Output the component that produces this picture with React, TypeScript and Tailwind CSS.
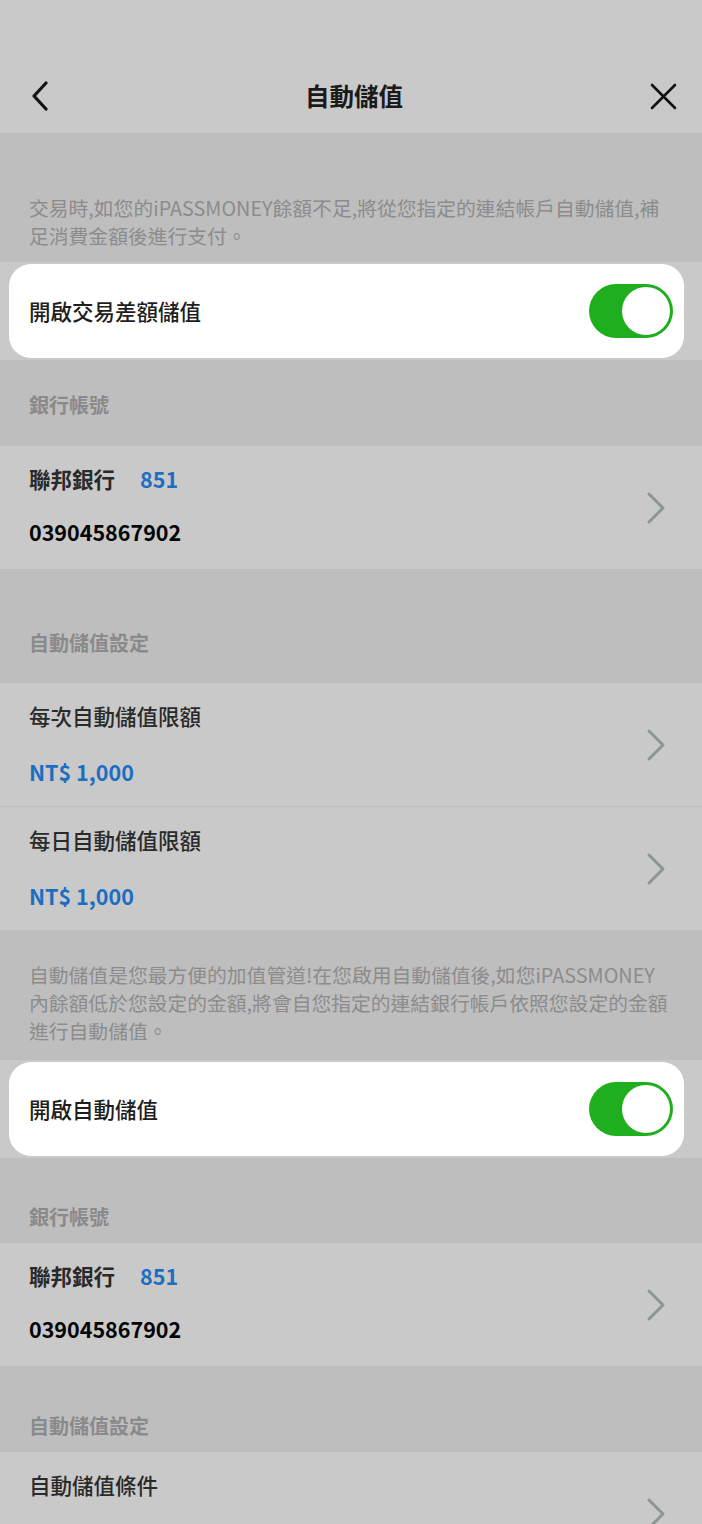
import React from "react";

const FONT = { fontFamily: '"Noto Sans CJK TC", "Noto Sans", sans-serif' };

function Chevron() {
  return (
    <svg width="20" height="34" viewBox="0 0 20 34" fill="none">
      <path d="M3 3 L17 17 L3 31" stroke="#8c9697" strokeWidth="3" strokeLinecap="round" strokeLinejoin="round" />
    </svg>
  );
}

function Toggle() {
  return (
    <div className="relative w-[84px] h-[54px] rounded-full bg-[#1fae1e]">
      <div className="absolute right-[3px] top-[3px] w-[48px] h-[48px] rounded-full bg-white" />
    </div>
  );
}

function ToggleRow({ label }: { label: string }) {
  return (
    <div className="bg-[#c9c9c9] py-[2px]">
      <div className="ml-[9px] mr-[18px] h-[94px] rounded-[22px] bg-white flex items-center justify-between pl-[20px] pr-[11px]">
        <span className="text-[21.5px] font-medium text-[#1e1e1e] leading-[28px]">{label}</span>
        <Toggle />
      </div>
    </div>
  );
}

function SectionTitle({ text, h, pt }: { text: string; h: string; pt: string }) {
  return (
    <div className={`bg-[#bebebe] px-[29px] ${h} ${pt}`}>
      <span className="text-[20px] font-bold text-[#8a8a8a] leading-[28px] block">{text}</span>
    </div>
  );
}

function BankRow() {
  return (
    <div className="bg-[#c9c9c9] h-[123px] flex items-center justify-between pl-[29px] pr-[36px]">
      <div className="flex flex-col pb-[4px]">
        <div className="flex items-center h-[28px]">
          <span className="text-[21.5px] font-bold text-[#2a2a2a] leading-[28px]">聯邦銀行</span>
          <span className="ml-[25px] text-[21.5px] font-bold text-[#1b6ec2] leading-[28px]">851</span>
        </div>
        <span className="mt-[25px] text-[21.5px] font-bold text-[#050505] leading-[28px]">039045867902</span>
      </div>
      <Chevron />
    </div>
  );
}

function LimitRow({ label }: { label: string }) {
  return (
    <div className="bg-[#c9c9c9] h-[123px] flex items-center justify-between pl-[29px] pr-[36px]">
      <div className="flex flex-col pb-[2px]">
        <span className="text-[21.5px] font-medium text-[#2a2a2a] leading-[28px]">{label}</span>
        <span className="mt-[28px] text-[21.5px] font-bold text-[#1b6ec2] leading-[28px]">NT$ 1,000</span>
      </div>
      <Chevron />
    </div>
  );
}

export default function App() {
  return (
    <div className="w-[702px] h-[1524px] overflow-hidden bg-[#bebebe]" style={FONT}>
      {/* Header */}
      <div className="bg-[#c9c9c9] h-[133px] pt-[69px]">
        <div className="h-[54px] grid grid-cols-[1fr_auto_1fr] items-center">
          <div className="pl-[31px] flex items-center">
            <svg width="18" height="30" viewBox="0 0 18 30" fill="none">
              <path d="M15 2 L3 15 L15 28" stroke="#111" strokeWidth="3.2" strokeLinecap="round" strokeLinejoin="round" />
            </svg>
          </div>
          <div className="pl-[6px] text-[24.5px] font-bold text-[#1a1a1a] leading-[32px]">自動儲值</div>
          <div className="flex justify-end pr-[25px]">
            <svg width="27" height="27" viewBox="0 0 27 27" fill="none">
              <path d="M2 2 L25 25 M25 2 L2 25" stroke="#111" strokeWidth="2.6" strokeLinecap="round" />
            </svg>
          </div>
        </div>
      </div>

      {/* Description 1 */}
      <div className="bg-[#bebebe] pt-[61px] pb-[12px] px-[29px]">
        <p className="text-[19.8px] text-[#8c8c8c] leading-[28px] whitespace-nowrap">
          交易時,如您的iPASSMONEY餘額不足,將從您指定的連結帳戶自動儲值,補
          <br />
          足消費金額後進行支付。
        </p>
      </div>

      <ToggleRow label="開啟交易差額儲值" />

      <SectionTitle text="銀行帳號" h="h-[86px]" pt="pt-[31px]" />
      <BankRow />

      <SectionTitle text="自動儲值設定" h="h-[114px]" pt="pt-[60px]" />
      <LimitRow label="每次自動儲值限額" />
      <div className="h-[1px] bg-[#bdbdbd]" />
      <LimitRow label="每日自動儲值限額" />

      {/* Description 2 */}
      <div className="bg-[#bebebe] pt-[31px] pb-[15px] px-[29px]">
        <p className="text-[19.8px] text-[#8c8c8c] leading-[28px] whitespace-nowrap">
          自動儲值是您最方便的加值管道!在您啟用自動儲值後,如您iPASSMONEY
          <br />
          內餘額低於您設定的金額,將會自您指定的連結銀行帳戶依照您設定的金額
          <br />
          進行自動儲值。
        </p>
      </div>

      <ToggleRow label="開啟自動儲值" />

      <SectionTitle text="銀行帳號" h="h-[85px]" pt="pt-[45px]" />
      <BankRow />

      <SectionTitle text="自動儲值設定" h="h-[86px]" pt="pt-[46px]" />
      <LimitRow label="自動儲值條件" />
    </div>
  );
}
